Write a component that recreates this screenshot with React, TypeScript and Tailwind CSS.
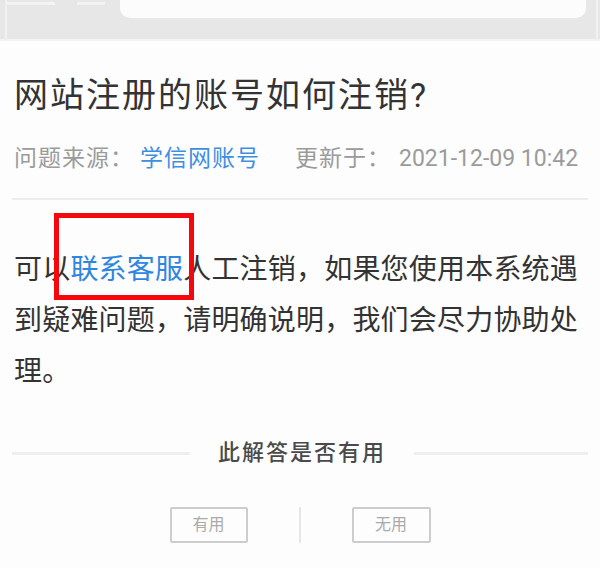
import React from "react";

const font = { fontFamily: 'Roboto, "Noto Sans CJK SC", "Noto Sans", sans-serif' };

export default function App() {
  return (
    <div
      className="relative w-[600px] h-[568px] overflow-hidden bg-[#fdfdfd] text-[#333]"
      style={font}
    >
      {/* top bar */}
      <div className="relative h-[41px] bg-[#e7e7e7] border-b-2 border-[#f3f3f3]">
        <div className="absolute left-[5px] top-0 h-[40px] w-[2px] bg-[#f1f1f1]" />
        <div className="absolute left-[7px] top-[2px] h-[3px] w-[48px] bg-[#f3f3f3]" />
        <div className="absolute left-[77px] top-[2px] h-[3px] w-[28px] bg-[#f3f3f3]" />
        <div className="absolute left-[120px] top-0 h-[18px] w-[466px] rounded-b-[10px] bg-[#fcfcfc]" />
        <div className="absolute right-[2px] top-0 h-[40px] w-[2px] bg-[#f1f1f1]" />
      </div>

      <div className="px-[14px]">
        <h1 className="mt-[30px] text-[34px] leading-[48px] tracking-[2px] text-[#333] font-normal">
          网站注册的账号如何注销?
        </h1>

        <div className="mt-[25px] flex items-center text-[23px] leading-[30px] tracking-[1px] text-[#9b9b9b] whitespace-nowrap">
          <span>问题来源：</span>
          <span className="ml-[6px] text-[#3d8fe4]">学信网账号</span>
          <span className="ml-[35px]">更新于：</span>
          <span className="ml-[8px] tracking-[0px]">2021-12-09 10:42</span>
        </div>
      </div>

      <div className="mx-[12px] mt-[24px] h-[2px] bg-[#ededed]" />

      <div className="px-[14px] mt-[44px]">
        <p className="text-[28px] leading-[51px] tracking-[0.2px] text-[#333]">
          可以<span className="text-[#2f86e0]">联系客服</span>人工注销，如果您使用本系统遇到疑难问题，请明确说明，我们会尽力协助处理。
        </p>
      </div>

      <div className="mt-[41px] flex items-center px-[12px]">
        <div className="h-[3px] w-[178px] bg-[#efefef]" />
        <div className="flex-1 text-center text-[22px] leading-[30px] tracking-[2px] font-medium text-[#4a4a4a]">
          此解答是否有用
        </div>
        <div className="h-[3px] w-[174px] bg-[#efefef]" />
      </div>

      <div className="mt-[39px] flex items-center justify-center">
        <div className="flex h-[36px] w-[78px] items-center justify-center rounded-[2px] border-2 border-[#cdcdcd] text-[16px] text-[#aaa]">
          有用
        </div>
        <div className="mx-[51px] h-[36px] w-[2px] bg-[#e6e6e6]" />
        <div className="flex h-[36px] w-[79px] items-center justify-center rounded-[2px] border-2 border-[#cdcdcd] text-[16px] text-[#aaa]">
          无用
        </div>
      </div>

      {/* red annotation box */}
      <div className="absolute left-[54px] top-[213px] h-[87px] w-[140px] border-[5px] border-[#f5070d]" />
    </div>
  );
}
